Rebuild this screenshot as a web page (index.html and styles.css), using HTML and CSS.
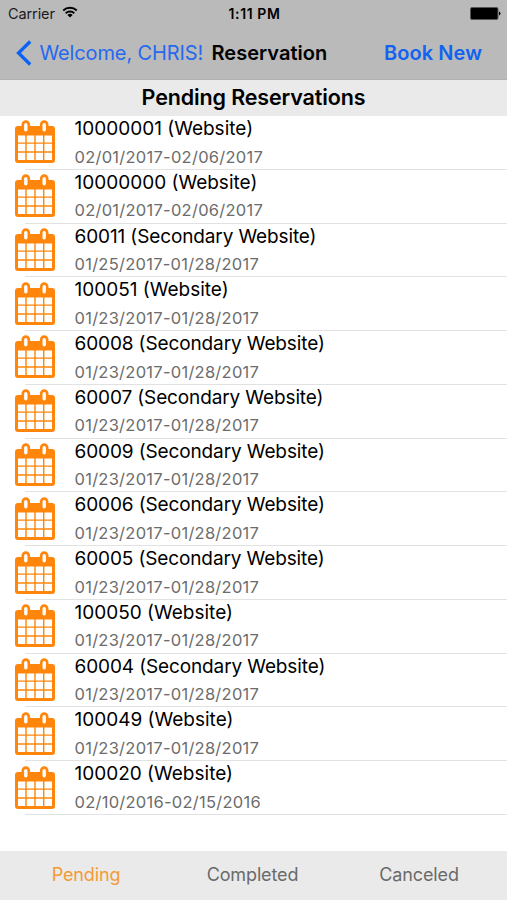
FILE: index.html
```html
<!DOCTYPE html>
<html lang="en">
<head>
<meta charset="utf-8">
<title>Reservation</title>
<link rel="stylesheet" href="styles.css">
</head>
<body>
<svg class="defs" aria-hidden="true">
  <symbol id="calendar" viewBox="0 0 40 43">
    <path fill="#ff860a" fill-rule="evenodd" d="M3 6H6.500V4.500a4.300 4.300 0 0 1 8.600 0V6H24.900V4.500a4.300 4.300 0 0 1 8.600 0V6H37a3 3 0 0 1 3 3V40a3 3 0 0 1-3 3H3a3 3 0 0 1-3-3V9a3 3 0 0 1 3-3ZM3 15.400h7.300v7H3ZM11.700 15.400h7.600v7h-7.600ZM20.700 15.400h7.300v7h-7.300ZM29.400 15.400H37v7h-7.600ZM3 23.800h7.300v7.500H3ZM11.700 23.800h7.600v7.500h-7.600ZM20.700 23.800h7.300v7.500h-7.300ZM29.400 23.800H37v7.500h-7.600ZM3 32.800h7.300V40H3ZM11.700 32.800h7.600V40h-7.600ZM20.700 32.800h7.300V40h-7.300ZM29.400 32.800H37V40h-7.600Z"/>
    <rect x="9.100" y="3" width="3.400" height="8.500" rx="1.700" fill="#fff"/>
    <rect x="27.500" y="3" width="3.400" height="8.500" rx="1.700" fill="#fff"/>
  </symbol>
</svg>
<div class="screen">
  <header class="top">
    <div class="status">
      <div class="carrier"><span>Carrier</span>
        <svg class="wifi" viewBox="0 0 16 12"><g fill="none" stroke="#000" stroke-width="1.900"><path d="M1.200 4.500a9.800 9.800 0 0 1 13.600 0"/><path d="M3.700 7.200a6.200 6.200 0 0 1 8.600 0"/></g><path d="M8 11.600 5.400 9a3.700 3.700 0 0 1 5.200 0Z"/></svg>
      </div>
      <span class="time">1:11 PM</span>
      <svg class="battery" viewBox="0 0 31 13"><rect x=".5" y=".5" width="27.500" height="12" rx="1.500" stroke="#555"/><path d="M29 4.500q1.500.4 1.500 2t-1.500 2Z"/></svg>
    </div>
    <nav class="nav">
      <a class="back"><svg class="chevron" viewBox="0 0 16 26"><path d="M14.200 1.500 2.500 13l11.700 11.500" fill="none" stroke="#0b63f3" stroke-width="3.300"/></svg><span>Welcome, CHRIS!</span></a>
      <h1 class="title">Reservation</h1>
      <a class="book">Book New</a>
    </nav>
  </header>
  <h2 class="section">Pending Reservations</h2>
  <main class="list">
    <div class="row"><svg class="cal"><use href="#calendar"/></svg><div class="info"><div class="name">10000001 (Website)</div><div class="date">02/01/2017-02/06/2017</div></div></div>
    <div class="row"><svg class="cal"><use href="#calendar"/></svg><div class="info"><div class="name">10000000 (Website)</div><div class="date">02/01/2017-02/06/2017</div></div></div>
    <div class="row"><svg class="cal"><use href="#calendar"/></svg><div class="info"><div class="name secondary">60011 (Secondary Website)</div><div class="date">01/25/2017-01/28/2017</div></div></div>
    <div class="row"><svg class="cal"><use href="#calendar"/></svg><div class="info"><div class="name">100051 (Website)</div><div class="date">01/23/2017-01/28/2017</div></div></div>
    <div class="row"><svg class="cal"><use href="#calendar"/></svg><div class="info"><div class="name secondary">60008 (Secondary Website)</div><div class="date">01/23/2017-01/28/2017</div></div></div>
    <div class="row"><svg class="cal"><use href="#calendar"/></svg><div class="info"><div class="name secondary">60007 (Secondary Website)</div><div class="date">01/23/2017-01/28/2017</div></div></div>
    <div class="row"><svg class="cal"><use href="#calendar"/></svg><div class="info"><div class="name secondary">60009 (Secondary Website)</div><div class="date">01/23/2017-01/28/2017</div></div></div>
    <div class="row"><svg class="cal"><use href="#calendar"/></svg><div class="info"><div class="name secondary">60006 (Secondary Website)</div><div class="date">01/23/2017-01/28/2017</div></div></div>
    <div class="row"><svg class="cal"><use href="#calendar"/></svg><div class="info"><div class="name secondary">60005 (Secondary Website)</div><div class="date">01/23/2017-01/28/2017</div></div></div>
    <div class="row"><svg class="cal"><use href="#calendar"/></svg><div class="info"><div class="name">100050 (Website)</div><div class="date">01/23/2017-01/28/2017</div></div></div>
    <div class="row"><svg class="cal"><use href="#calendar"/></svg><div class="info"><div class="name secondary">60004 (Secondary Website)</div><div class="date">01/23/2017-01/28/2017</div></div></div>
    <div class="row"><svg class="cal"><use href="#calendar"/></svg><div class="info"><div class="name">100049 (Website)</div><div class="date">01/23/2017-01/28/2017</div></div></div>
    <div class="row"><svg class="cal"><use href="#calendar"/></svg><div class="info"><div class="name">100020 (Website)</div><div class="date">02/10/2016-02/15/2016</div></div></div>
  </main>
  <footer class="tabs">
    <a class="tab active">Pending</a>
    <a class="tab">Completed</a>
    <a class="tab">Canceled</a>
  </footer>
</div>
</body>
</html>
```
FILE: styles.css
```css
* { box-sizing: border-box; }
body { margin: 0; background: #fff; font-family: Inter, "Liberation Sans", sans-serif; color: #000; }
.defs { display: none; }
.screen { display: flex; flex-direction: column; width: 507px; height: 900px; overflow: hidden; white-space: nowrap; }
.top { height: 79.5px; background: #bababa; border-bottom: 1px solid #b0b0b0; }
.status { display: grid; grid-template-columns: 1fr auto 1fr; align-items: center; height: 27px; padding: 0 6px 0 8px; }
.carrier { display: flex; align-items: center; gap: 7px; font-size: 14.5px; color: #1c1c1c; letter-spacing: -0.1px; }
.wifi { width: 16px; height: 12px; margin-top: -3px; }
.time { font-size: 14px; font-weight: 600; letter-spacing: 0.6px; }
.battery { width: 31px; height: 13px; justify-self: end; }
.nav { display: flex; align-items: center; height: 51px; padding: 0 25px 0 16px; font-size: 20px; }
.back { display: flex; align-items: center; width: 195.5px; color: #2469ef; }
.back span { margin-left: 7.5px; letter-spacing: -0.13px; }
.chevron { flex: none; width: 16px; height: 26px; }
.title { margin: 0; font-size: 20px; font-weight: 600; letter-spacing: 0.03px; }
.book { margin-left: auto; font-weight: 600; color: #1263ef; letter-spacing: 0.07px; }
.section { margin: 0; height: 36.5px; line-height: 35px; background: #eaeaea; text-align: center; font-size: 21.5px; font-weight: 600; letter-spacing: -0.14px; }
.list { flex: 1; }
.row { display: flex; height: 53.77px; padding: 4.4px 0 0 15px; background: linear-gradient(#e2e2e2, #e2e2e2) 25px 100% / 100% 1px no-repeat; }
.cal { width: 40px; height: 43px; flex: none; }
.info { margin-left: 19.5px; margin-top: -4.4px; }
.name { height: 26.5px; line-height: 26px; font-size: 19px; letter-spacing: 0; }
.name.secondary { letter-spacing: -0.12px; }
.date { line-height: 29.5px; font-size: 16.5px; color: #6c6c6c; letter-spacing: 0.26px; }
.tabs { display: grid; grid-template-columns: 172px 161px 1fr; height: 49px; padding-bottom: 2px; align-items: center; text-align: center; background: #eaeaea; font-size: 18px; color: #6a6a6a; letter-spacing: -0.12px; }
.tab.active { color: #f49a35; }
.tab:last-child { margin-right: 2px; }
```
